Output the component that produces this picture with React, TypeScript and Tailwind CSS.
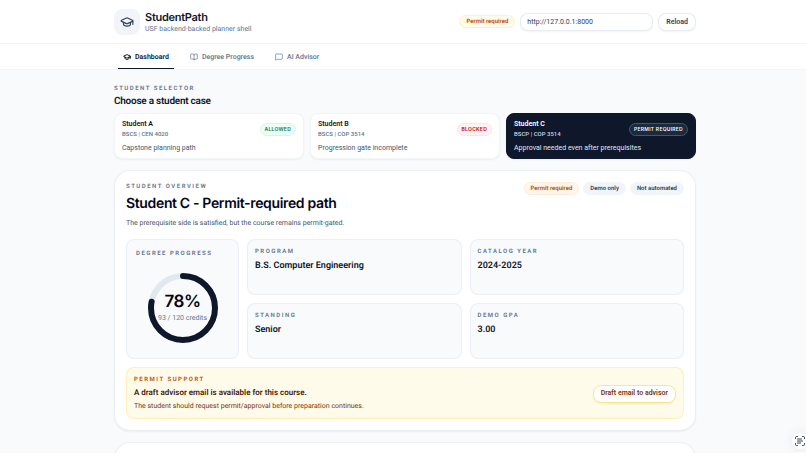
import { BookOpen, GraduationCap, MessageSquare, ScanText } from "lucide-react";
import type { ReactNode } from "react";

const students = [
  {
    name: "Student A",
    course: "BSCS | CEN 4020",
    note: "Capstone planning path",
    status: "ALLOWED",
    card: "border-slate-100 bg-white text-slate-900",
    sub: "text-slate-500",
    body: "text-slate-600",
    badge: "border-emerald-100 bg-emerald-50 text-emerald-700",
  },
  {
    name: "Student B",
    course: "BSCS | COP 3514",
    note: "Progression gate incomplete",
    status: "BLOCKED",
    card: "border-slate-100 bg-white text-slate-900",
    sub: "text-slate-500",
    body: "text-slate-600",
    badge: "border-red-100 bg-red-50 text-red-700",
  },
  {
    name: "Student C",
    course: "BSCP | COP 3514",
    note: "Approval needed even after prerequisites",
    status: "PERMIT REQUIRED",
    card: "border-slate-900 bg-slate-900 text-white",
    sub: "text-slate-300",
    body: "text-slate-200",
    badge: "border-slate-600 bg-slate-800 text-slate-100",
  },
];

const facts = [
  ["PROGRAM", "B.S. Computer Engineering"],
  ["CATALOG YEAR", "2024-2025"],
  ["STANDING", "Senior"],
  ["DEMO GPA", "3.00"],
];

function Container({ children, className = "" }: { children: ReactNode; className?: string }) {
  return (
    <div className="pl-1">
      <div className={`mx-auto max-w-[582px] ${className}`}>{children}</div>
    </div>
  );
}

function Eyebrow({ children, className = "text-slate-500" }: { children: ReactNode; className?: string }) {
  return <p className={`text-[6px] leading-[10px] font-semibold tracking-[1.5px] ${className}`}>{children}</p>;
}

function Chip({ children, className }: { children: ReactNode; className: string }) {
  return (
    <span className={`rounded-full border px-[6px] text-[6px] leading-[11px] font-semibold whitespace-nowrap ${className}`}>
      {children}
    </span>
  );
}

function ProgressRing() {
  const length = 2 * Math.PI * 32;
  return (
    <div className="relative mx-auto mt-[13px] size-[72px]">
      <svg viewBox="0 0 72 72" className="size-full -rotate-90" fill="none" strokeWidth="6" aria-hidden="true">
        <circle cx="36" cy="36" r="32" stroke="#e2e8f0" />
        <circle cx="36" cy="36" r="32" stroke="#0f172a" strokeLinecap="round" strokeDasharray={`${length * 0.78} ${length}`} />
      </svg>
      <div className="absolute inset-0 flex flex-col items-center justify-center text-center">
        <span className="font-['Inter',sans-serif] text-[17px] leading-5 font-semibold tracking-tight text-slate-950">78%</span>
        <span className="text-[7px] leading-3 whitespace-nowrap text-slate-500">93 / 120 credits</span>
      </div>
    </div>
  );
}

export default function App() {
  return (
    <div className="relative h-screen overflow-hidden bg-slate-50 font-['Roboto','Inter',sans-serif] text-slate-900 [text-rendering:geometricPrecision]">
      <header className="bg-white">
        <div className="border-b border-slate-100">
          <Container className="flex h-[43px] items-center justify-between">
            <div className="flex items-center gap-[5px]">
              <div className="flex size-[26px] items-center justify-center rounded-lg border border-slate-100 bg-slate-100">
                <GraduationCap className="size-[14px] text-slate-700" strokeWidth={2} />
              </div>
              <div className="pt-px">
                <h1 className="font-['Inter',sans-serif] text-[11px] leading-[13px] font-semibold tracking-tight">StudentPath</h1>
                <p className="text-[7px] leading-[10px] text-slate-500">USF backend-backed planner shell</p>
              </div>
            </div>
            <div className="flex items-center gap-[5px]">
              <Chip className="border-amber-100 bg-amber-50 text-amber-700">Permit required</Chip>
              <input
                aria-label="Backend URL"
                defaultValue="http://127.0.0.1:8000"
                className="h-[18px] w-[133px] rounded-lg border border-slate-200/80 bg-white px-[6px] text-[7px] text-slate-700 shadow-xs outline-none"
              />
              <button className="h-[18px] rounded-lg border border-slate-200/80 bg-white px-[7px] pt-px text-[7px] font-semibold text-slate-700 shadow-xs">
                Reload
              </button>
            </div>
          </Container>
        </div>
        <div className="border-b border-slate-100">
          <Container className="px-1">
            <nav className="flex h-[25px] gap-[5px] text-[7px] font-medium text-slate-500">
              <a href="#dashboard" className="flex items-center gap-1 border-b border-slate-900 px-[5px] pt-[2px] font-semibold text-slate-900">
                <GraduationCap className="size-2" strokeWidth={3} />
                Dashboard
              </a>
              <a href="#progress" className="flex items-center gap-1 px-[11px] pt-px">
                <BookOpen className="size-2" />
                Degree Progress
              </a>
              <a href="#advisor" className="flex items-center gap-1 px-[5px] pt-px">
                <MessageSquare className="size-2" />
                AI Advisor
              </a>
            </nav>
          </Container>
        </div>
      </header>

      <main>
        <Container className="pt-[14px]">
          <section>
            <Eyebrow>STUDENT SELECTOR</Eyebrow>
            <h2 className="mt-[2px] text-[10px] leading-3 font-semibold tracking-tight">Choose a student case</h2>
            <div className="mt-[5px] grid grid-cols-3 gap-[6px]">
              {students.map((s) => (
                <button key={s.name} className={`rounded-lg border px-[7px] py-[5px] text-left shadow-xs ${s.card}`}>
                  <span className="flex items-center justify-between">
                    <span>
                      <span className="block text-[7px] leading-[10px] font-semibold">{s.name}</span>
                      <span className={`block text-[6px] leading-[10px] font-medium ${s.sub}`}>{s.course}</span>
                    </span>
                    <span className={`rounded-full border px-1 font-['Inter',sans-serif] text-[5px] leading-[11px] font-semibold tracking-wider ${s.badge}`}>
                      {s.status}
                    </span>
                  </span>
                  <span className={`mt-1 block text-[7px] leading-[10px] ${s.body}`}>{s.note}</span>
                </button>
              ))}
            </div>
          </section>

          <section className="mt-[11px] rounded-2xl border border-slate-200/70 bg-white p-[11px] shadow-xs">
            <div className="flex items-start justify-between">
              <div>
                <Eyebrow>STUDENT OVERVIEW</Eyebrow>
                <h2 className="mt-[3px] font-['Inter',sans-serif] text-[14px] leading-[18px] font-semibold tracking-tight text-slate-950">
                  Student C - Permit-required path
                </h2>
                <p className="mt-1 text-[7px] leading-3 text-slate-600">
                  The prerequisite side is satisfied, but the course remains permit-gated.
                </p>
              </div>
              <div className="flex gap-1">
                <Chip className="border-orange-100 bg-orange-50 text-amber-700">Permit required</Chip>
                <Chip className="border-slate-100 bg-slate-100 text-slate-700">Demo only</Chip>
                <Chip className="border-slate-100 bg-slate-100 text-slate-700">Not automated</Chip>
              </div>
            </div>

            <div className="mt-[10px] grid grid-cols-[113px_1fr] gap-2">
              <div className="h-[120px] rounded-lg border border-slate-200/60 bg-slate-50 p-[9px]">
                <Eyebrow>DEGREE PROGRESS</Eyebrow>
                <ProgressRing />
              </div>
              <dl className="grid grid-cols-2 grid-rows-2 gap-2">
                {facts.map(([label, value]) => (
                  <div key={label} className="rounded-lg border border-slate-200/60 bg-slate-50 p-[7px]">
                    <dt className="text-[6px] leading-[10px] font-semibold tracking-[1.5px] text-slate-500">{label}</dt>
                    <dd className="mt-[3px] text-[9px] leading-3 font-semibold">{value}</dd>
                  </div>
                ))}
              </dl>
            </div>

            <div className="mt-2 flex items-center justify-between rounded-lg border border-amber-200/50 bg-amber-50 px-[7px] pt-[7px] pb-[6px]">
              <div>
                <Eyebrow className="text-amber-700">PERMIT SUPPORT</Eyebrow>
                <p className="mt-[2px] text-[8px] leading-3 font-semibold text-amber-950">
                  A draft advisor email is available for this course.
                </p>
                <p className="mt-px text-[7px] leading-3 text-amber-900">
                  The student should request permit/approval before preparation continues.
                </p>
              </div>
              <button className="h-[18px] rounded-lg border border-amber-200 bg-white px-[7px] text-[7px] font-semibold text-amber-900 shadow-xs">
                Draft email to advisor
              </button>
            </div>
          </section>

          <section className="mt-[11px] h-20 rounded-2xl border border-slate-200/70 bg-white shadow-xs" />
        </Container>
      </main>

      <button
        aria-label="Scan text"
        className="absolute right-[-2px] bottom-1 flex size-4 items-center justify-center rounded-full bg-white text-slate-700 shadow-[0_0_12px_rgba(15,23,42,0.08)]"
      >
        <ScanText className="size-3" strokeWidth={2} />
      </button>
    </div>
  );
}
